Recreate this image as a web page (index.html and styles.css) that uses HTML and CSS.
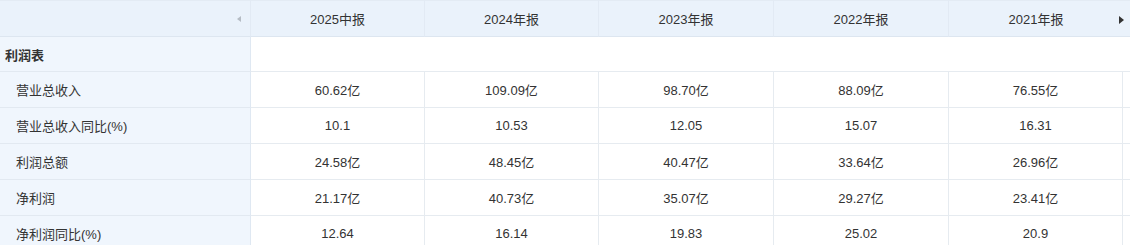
FILE: index.html
```html
<!DOCTYPE html>
<html lang="zh">
<head>
<meta charset="utf-8">
<link rel="stylesheet" href="styles.css">
</head>
<body>
<div class="table">
  <div class="row head">
    <div class="cell label"><span class="arrow-left"></span></div>
    <div class="cell">2025中报</div>
    <div class="cell">2024年报</div>
    <div class="cell">2023年报</div>
    <div class="cell">2022年报</div>
    <div class="cell last">2021年报<span class="arrow-right"></span></div>
  </div>
  <div class="row section">
    <div class="cell label bold">利润表</div>
    <div class="cell span"></div>
  </div>
  <div class="row">
    <div class="cell label sub">营业总收入</div>
    <div class="cell">60.62亿</div>
    <div class="cell">109.09亿</div>
    <div class="cell">98.70亿</div>
    <div class="cell">88.09亿</div>
    <div class="cell">76.55亿</div>
    <div class="cell tail"></div>
  </div>
  <div class="row">
    <div class="cell label sub">营业总收入同比(%)</div>
    <div class="cell">10.1</div>
    <div class="cell">10.53</div>
    <div class="cell">12.05</div>
    <div class="cell">15.07</div>
    <div class="cell">16.31</div>
    <div class="cell tail"></div>
  </div>
  <div class="row">
    <div class="cell label sub">利润总额</div>
    <div class="cell">24.58亿</div>
    <div class="cell">48.45亿</div>
    <div class="cell">40.47亿</div>
    <div class="cell">33.64亿</div>
    <div class="cell">26.96亿</div>
    <div class="cell tail"></div>
  </div>
  <div class="row">
    <div class="cell label sub">净利润</div>
    <div class="cell">21.17亿</div>
    <div class="cell">40.73亿</div>
    <div class="cell">35.07亿</div>
    <div class="cell">29.27亿</div>
    <div class="cell">23.41亿</div>
    <div class="cell tail"></div>
  </div>
  <div class="row">
    <div class="cell label sub">净利润同比(%)</div>
    <div class="cell">12.64</div>
    <div class="cell">16.14</div>
    <div class="cell">19.83</div>
    <div class="cell">25.02</div>
    <div class="cell">20.9</div>
    <div class="cell tail"></div>
  </div>
</div>
</body>
</html>
```
FILE: styles.css
```css
html, body {
  margin: 0;
  padding: 0;
  background: #ffffff;
}
body {
  font-family: "Liberation Sans", "Noto Sans CJK SC", sans-serif;
  font-size: 13px;
  color: #333333;
  width: 1130px;
  overflow: hidden;
}
.table {
  display: flex;
  flex-direction: column;
}
.row {
  display: grid;
  grid-template-columns: 251px 174px 174px 175px 175px 174px 7px;
  height: 36px;
}
.cell {
  box-sizing: border-box;
  display: flex;
  align-items: center;
  justify-content: center;
  border-right: 1px solid #e6ebf0;
  border-bottom: 1px solid #e6ebf0;
  white-space: nowrap;
}
.cell.label {
  justify-content: flex-start;
  background: #f0f6fd;
  border-right: 1px solid #dfe8f2;
  border-bottom-color: #e2e9f1;
  padding-left: 5px;
}
.cell.label.sub {
  padding-left: 16px;
}
.bold {
  font-weight: bold;
}
.cell.tail {
  border-right: none;
}
.row.head {
  height: 37px;
}
.row.head .cell {
  background: #eaf2fb;
  border-top: 1px solid #e3ebf4;
  border-right: 1px solid #e2eaf4;
  border-bottom: 1px solid #dde6f0;
}
.row.head .cell.label {
  justify-content: flex-end;
  padding-right: 9px;
}
.row.head .cell.last {
  grid-column: span 2;
  border-right: none;
  position: relative;
  padding-right: 7px;
}
.arrow-left {
  width: 0;
  height: 0;
  border-top: 3px solid transparent;
  border-bottom: 3px solid transparent;
  border-right: 4px solid #b5bcc4;
}
.arrow-right {
  position: absolute;
  right: 6px;
  top: 15px;
  width: 0;
  height: 0;
  border-top: 4px solid transparent;
  border-bottom: 4px solid transparent;
  border-left: 5px solid #333333;
}
.row.section {
  height: 35px;
}
.cell.span {
  grid-column: span 6;
  border-right: none;
  background: #ffffff;
}
```
